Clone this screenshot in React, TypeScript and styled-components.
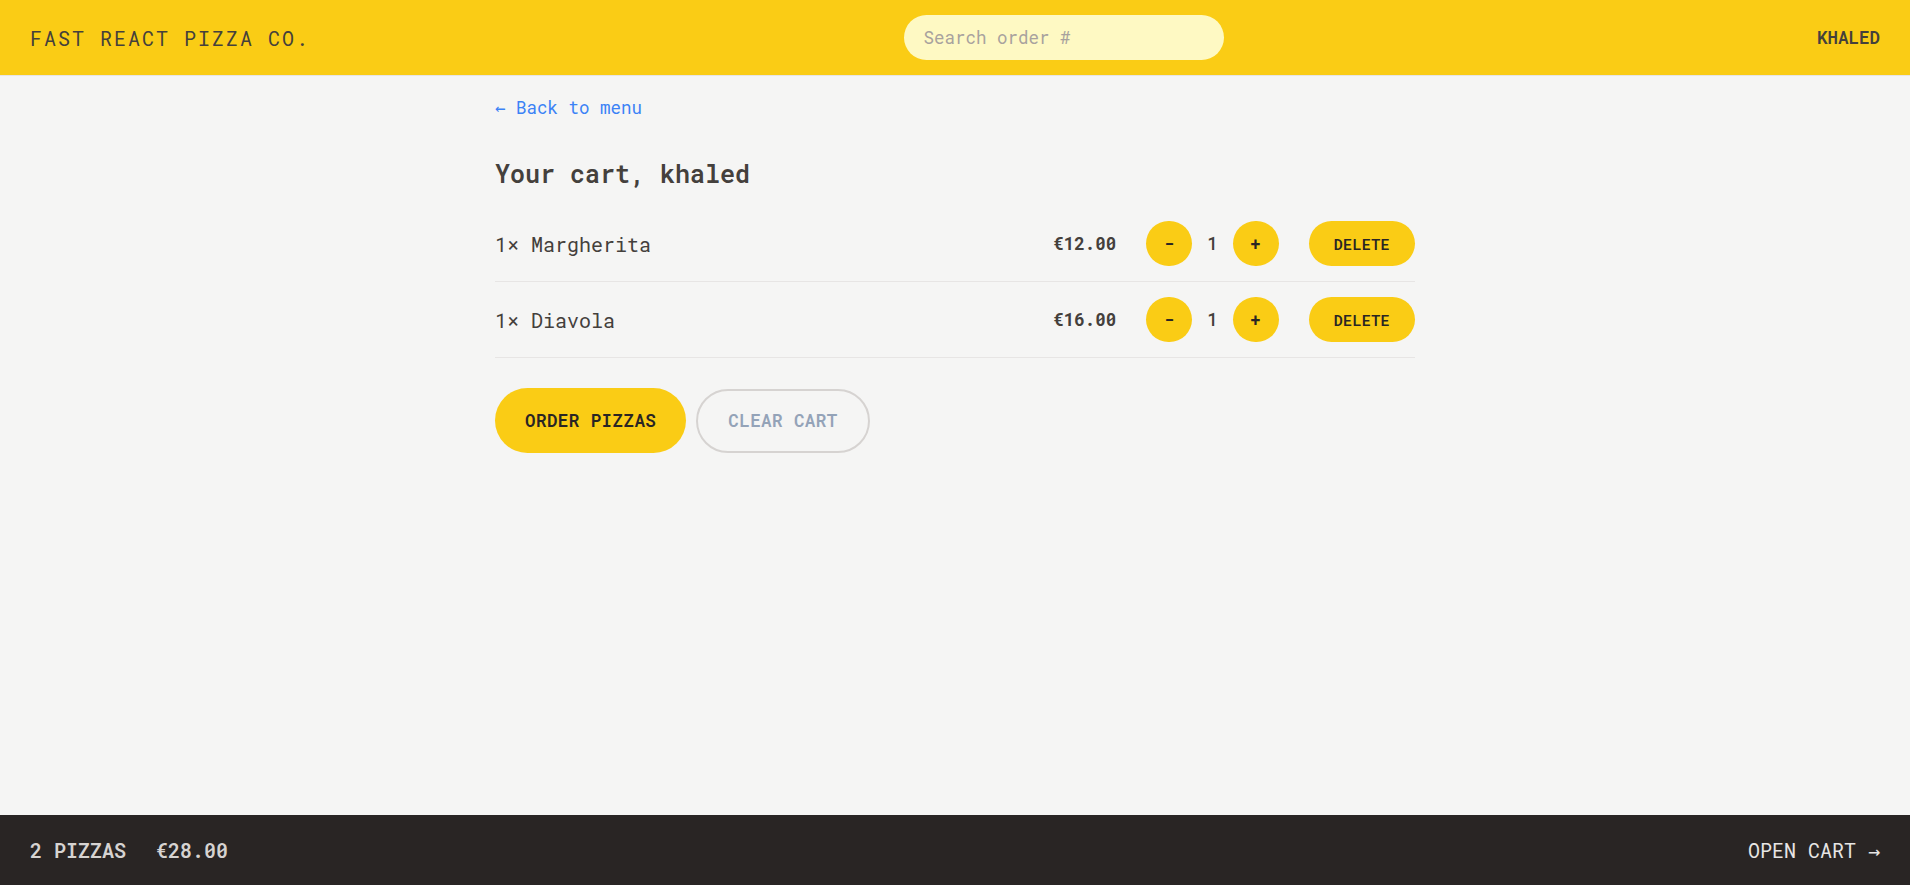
import React from 'react';
import styled, { createGlobalStyle, css } from 'styled-components';

// the reference is a tailwind page photographed at 125% zoom,
// so the root font-size is 20px and everything below is in rem
const GlobalStyle = createGlobalStyle`
  *, *::before, *::after {
    box-sizing: border-box;
  }

  html {
    font-size: 20px;
  }

  body {
    margin: 0;
    font-family: "Roboto Mono", "DejaVu Sans Mono", "Liberation Mono", monospace;
    line-height: 1.5;
    color: #44403c;
    background: #f5f5f4;
  }
`;

const Layout = styled.div`
  display: grid;
  grid-template-rows: auto 1fr auto;
  height: 100vh;
`;

const Header = styled.header`
  display: flex;
  align-items: center;
  justify-content: space-between;
  padding: 0.75rem 1.5rem;
  background: #facc15;
  border-bottom: 1px solid #e7e5e4;
  text-transform: uppercase;
`;

const Logo = styled.a`
  color: inherit;
  text-decoration: none;
  letter-spacing: 0.1em;
`;

const SearchInput = styled.input`
  width: 16rem;
  padding: 0.5rem 1rem;
  border: none;
  border-radius: 9999px;
  background: #fef9c3;
  font-family: inherit;
  font-size: 0.875rem;
  line-height: 1.25rem;
  color: #44403c;
  text-transform: none;
  outline: none;

  &::placeholder {
    color: #a8a29e;
  }
`;

const Username = styled.div`
  font-size: 0.875rem;
  line-height: 1.25rem;
  font-weight: 600;
`;

const Main = styled.main`
  overflow: auto;
`;

const Container = styled.div`
  max-width: 48rem;
  margin: 0 auto;
`;

const CartPage = styled.div`
  padding: 0.75rem 1rem;
`;

const BackLink = styled.a`
  font-size: 0.875rem;
  line-height: 1.25rem;
  color: #3b82f6;
  text-decoration: none;
`;

const Title = styled.h2`
  margin: 1.75rem 0 0;
  font-size: 1.25rem;
  line-height: 1.75rem;
  font-weight: 600;
`;

const ItemList = styled.ul`
  margin: 0.75rem 0 0;
  padding: 0;
  list-style: none;
  border-bottom: 1px solid #e7e5e4;
`;

const Item = styled.li`
  display: flex;
  align-items: center;
  justify-content: space-between;
  padding: 0.75rem 0;

  & + & {
    border-top: 1px solid #e7e5e4;
  }
`;

const ItemName = styled.p`
  margin: 0;
`;

const ItemControls = styled.div`
  display: flex;
  align-items: center;
  gap: 1.5rem;
`;

const Price = styled.p`
  margin: 0;
  font-size: 0.875rem;
  line-height: 1.25rem;
  font-weight: 700;
`;

const QuantityBox = styled.div`
  display: flex;
  align-items: center;
  gap: 0.75rem;
`;

const Quantity = styled.span`
  font-size: 0.875rem;
  line-height: 1.25rem;
  font-weight: 500;
`;

type Variant = 'primary' | 'small' | 'round' | 'secondary';

const variants = {
  primary: css`
    padding: 1rem 1.5rem;
  `,
  small: css`
    padding: 0.625rem 1.25rem;
    font-size: 0.75rem;
    line-height: 1rem;
  `,
  round: css`
    padding: 0.5rem 0.875rem;
  `,
  secondary: css`
    padding: 0.875rem 1.5rem;
    background: transparent;
    border: 2.5px solid #d6d3d1;
    color: #94a3b8;
  `,
};

const Button = styled.button<{ $variant: Variant }>`
  display: inline-block;
  border: none;
  border-radius: 9999px;
  background: #facc15;
  font-family: inherit;
  font-size: 0.875rem;
  line-height: 1.25rem;
  font-weight: 600;
  letter-spacing: 0.025em;
  text-transform: uppercase;
  color: #292524;
  cursor: pointer;
  ${(p) => variants[p.$variant]}
`;

const Actions = styled.div`
  display: flex;
  align-items: center;
  gap: 0.5rem;
  margin-top: 1.5rem;
`;

const Footer = styled.footer`
  display: flex;
  align-items: center;
  justify-content: space-between;
  padding: 1rem 1.5rem;
  background: #292524;
  color: #e7e5e4;
  font-size: 1rem;
  line-height: 1.5rem;
  text-transform: uppercase;
`;

const Summary = styled.p`
  display: flex;
  gap: 1.5rem;
  margin: 0;
  font-weight: 600;
  color: #d6d3d1;
`;

const OpenCart = styled.a`
  color: inherit;
  text-decoration: none;
`;

const cart = [
  { id: 1, name: 'Margherita', quantity: 1, price: 12 },
  { id: 2, name: 'Diavola', quantity: 1, price: 16 },
];

const money = (v: number) => `€${v.toFixed(2)}`;

const App: React.FC = () => {
  const totalQty = cart.reduce((s, i) => s + i.quantity, 0);
  const total = cart.reduce((s, i) => s + i.quantity * i.price, 0);

  return (
    <Layout>
      <GlobalStyle />
      <Header>
        <Logo href="#">Fast React Pizza Co.</Logo>
        <form onSubmit={(e) => e.preventDefault()}>
          <SearchInput placeholder="Search order #" />
        </form>
        <Username>khaled</Username>
      </Header>

      <Main>
        <Container>
          <CartPage>
            <BackLink href="#">&larr; Back to menu</BackLink>
            <Title>Your cart, khaled</Title>
            <ItemList>
              {cart.map((item) => (
                <Item key={item.id}>
                  <ItemName>
                    {item.quantity}&times; {item.name}
                  </ItemName>
                  <ItemControls>
                    <Price>{money(item.quantity * item.price)}</Price>
                    <QuantityBox>
                      <Button $variant="round">-</Button>
                      <Quantity>{item.quantity}</Quantity>
                      <Button $variant="round">+</Button>
                    </QuantityBox>
                    <Button $variant="small">Delete</Button>
                  </ItemControls>
                </Item>
              ))}
            </ItemList>
            <Actions>
              <Button $variant="primary">Order pizzas</Button>
              <Button $variant="secondary">Clear cart</Button>
            </Actions>
          </CartPage>
        </Container>
      </Main>

      <Footer>
        <Summary>
          <span>{totalQty} pizzas</span>
          <span>{money(total)}</span>
        </Summary>
        <OpenCart href="#">Open cart &rarr;</OpenCart>
      </Footer>
    </Layout>
  );
};

export default App;
